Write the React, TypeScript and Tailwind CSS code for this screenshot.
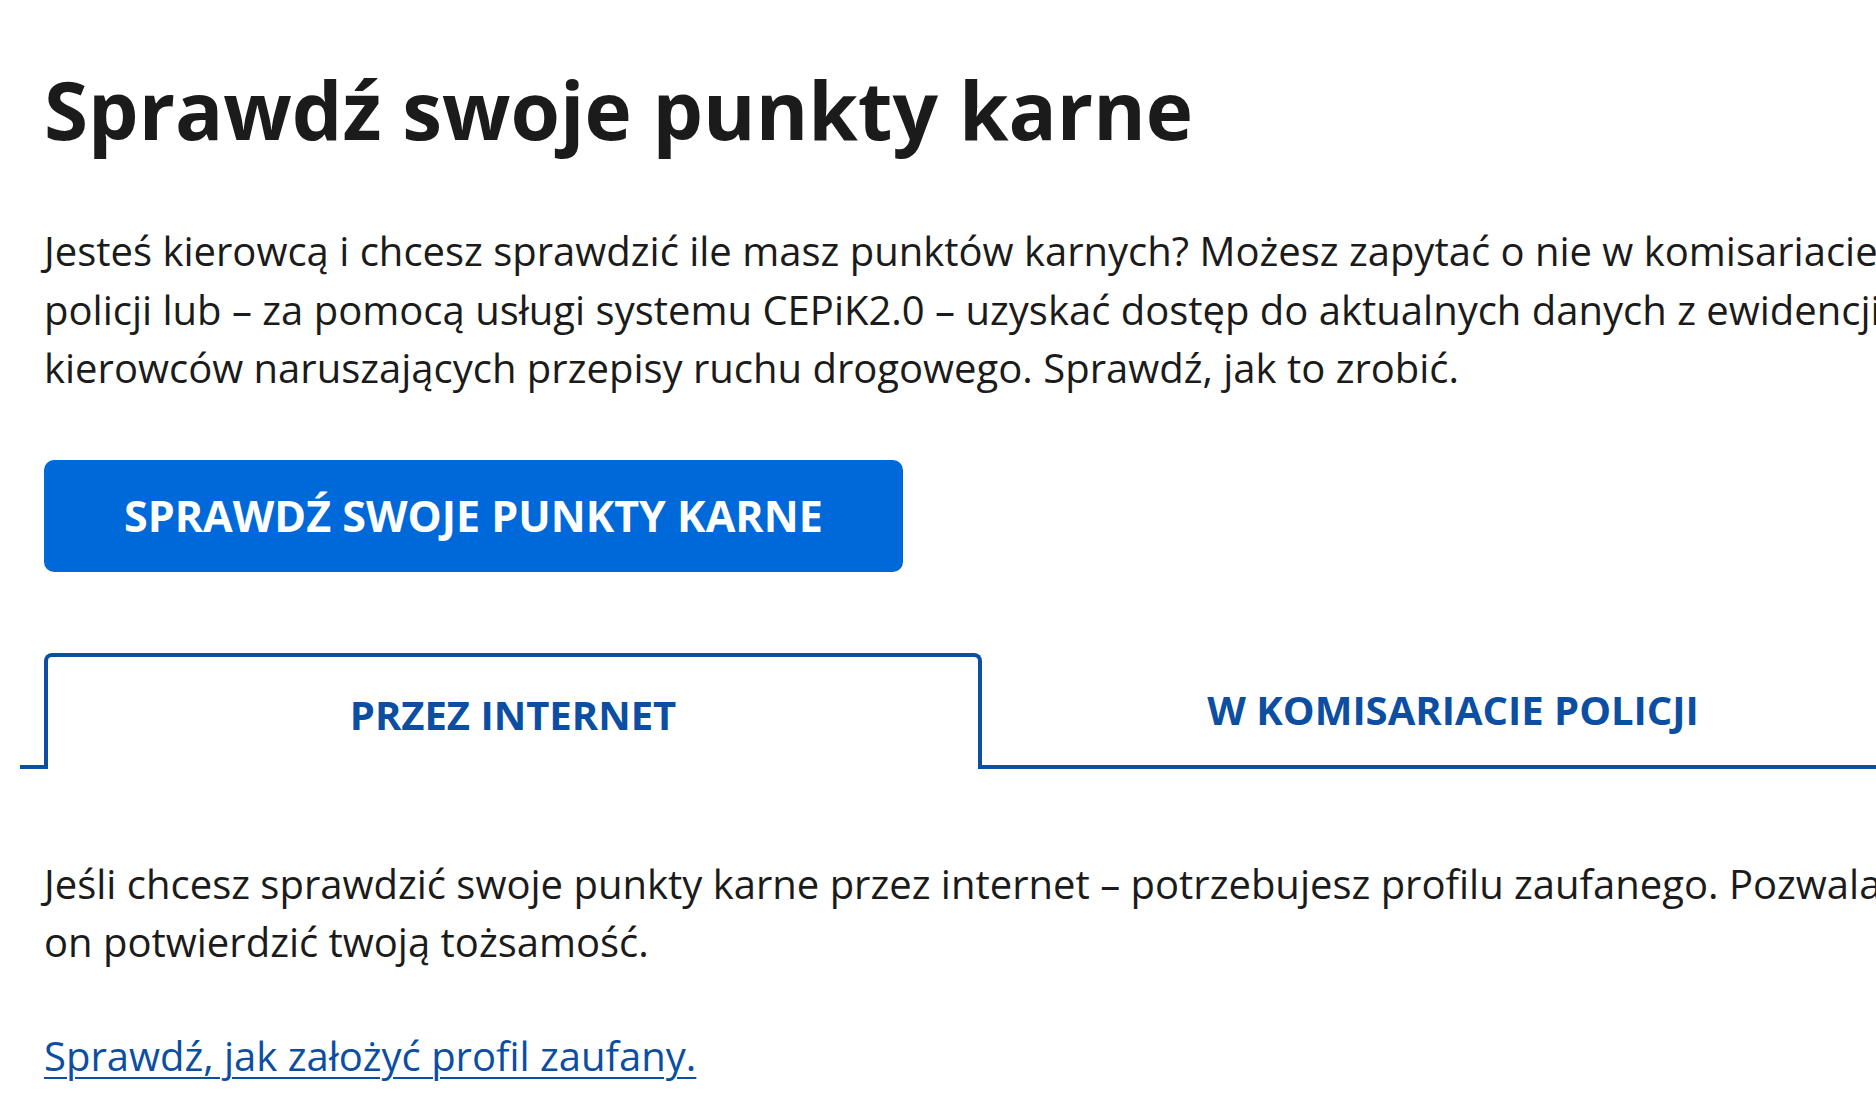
import React from 'react';

const tabs = ['Przez internet', 'W komisariacie policji'];

export default function App() {
    const active = 0;

    return (
        <div className="min-h-screen w-full overflow-hidden bg-white font-['Open_Sans',sans-serif] text-[#1b1b1b]">
            <main className="pl-11 pt-[61px]">
                <div className="w-[1880px]">
                    <h1 className="text-[80px] leading-[96px] font-bold">Sprawdź swoje punkty karne</h1>

                    <p className="mt-[65px] w-[2100px] text-[40px] leading-[58.5px]">
                        Jesteś kierowcą i chcesz sprawdzić ile masz punktów karnych? Możesz zapytać o nie w komisariacie
                        <br />
                        policji lub – za pomocą usługi systemu CEPiK2.0 – uzyskać dostęp do aktualnych danych z ewidencji
                        <br />
                        kierowców naruszających przepisy ruchu drogowego. Sprawdź, jak to zrobić.
                    </p>

                    <div className="mt-[62px]">
                        <button className="rounded-[10px] bg-[#0069d9] px-20 py-8 text-[43px] leading-[48px] font-bold uppercase text-white">
                            Sprawdź swoje punkty karne
                        </button>
                    </div>

                    {/* tabs */}
                    <div className="mt-[81px] -ml-6 flex w-[1904px] border-b-4 border-[#0b4ea2] pl-6">
                        {tabs.map((t, i) =>
                            i === active ? (
                                <div
                                    key={t}
                                    className="-mb-1 w-[938px] shrink-0 rounded-t-[8px] border-4 border-b-0 border-[#0b4ea2] bg-white pt-[34px] pb-[30px] text-center text-[40px] leading-[48px] font-bold uppercase text-[#0b4ea2]"
                                >
                                    {t}
                                </div>
                            ) : (
                                <div
                                    key={t}
                                    className="flex-1 pt-[33px] text-center text-[40px] leading-[48px] font-bold uppercase text-[#0b4ea2]"
                                >
                                    {t}
                                </div>
                            )
                        )}
                    </div>

                    <p className="mt-[86px] w-[2100px] text-[40px] leading-[58.5px]">
                        Jeśli chcesz sprawdzić swoje punkty karne przez internet – potrzebujesz profilu zaufanego. Pozwala
                        <br />
                        on potwierdzić twoją tożsamość.
                    </p>

                    <p className="mt-[55px] text-[40px] leading-[58.5px]">
                        <a href="#" className="text-[#0b4ea2] underline decoration-2 underline-offset-[6px]">
                            Sprawdź, jak założyć profil zaufany.
                        </a>
                    </p>
                </div>
            </main>
        </div>
    );
}
